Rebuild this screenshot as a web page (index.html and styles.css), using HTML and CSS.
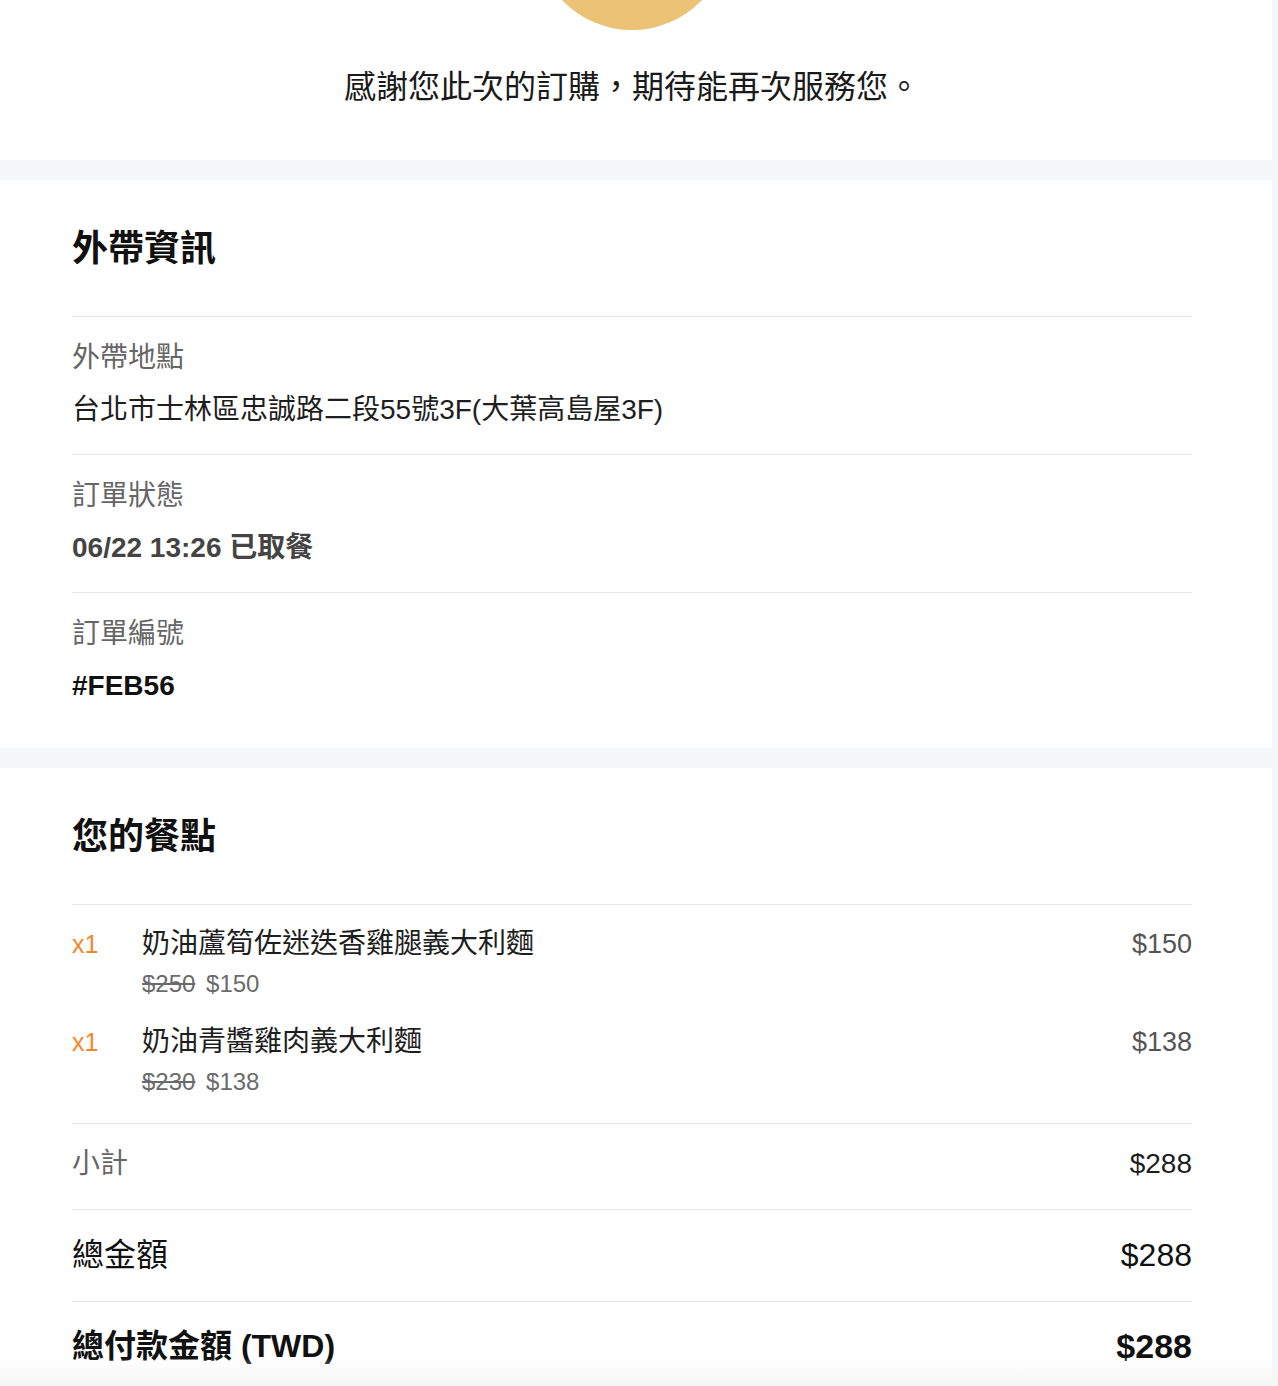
FILE: index.html
```html
<!DOCTYPE html>
<html lang="zh-Hant">
<head>
  <meta charset="UTF-8">
  <meta name="viewport" content="width=device-width, initial-scale=1.0">
  <link rel="stylesheet" href="styles.css">
  <title>訂單明細</title>
</head>
<body>
  <div class="page">
    <section class="thanks">
      <div class="avatar"></div>
      <p class="thanks-text">感謝您此次的訂購，期待能再次服務您。</p>
    </section>

    <section class="card">
      <h2>外帶資訊</h2>
      <div class="info-row">
        <div class="label">外帶地點</div>
        <div class="value">台北市士林區忠誠路二段55號3F(大葉高島屋3F)</div>
      </div>
      <div class="info-row">
        <div class="label">訂單狀態</div>
        <div class="value status">06/22 13:26 已取餐</div>
      </div>
      <div class="info-row last">
        <div class="label">訂單編號</div>
        <div class="value order-no">#FEB56</div>
      </div>
    </section>

    <section class="card">
      <h2>您的餐點</h2>
      <div class="items">
        <div class="item">
          <span class="qty">x1</span>
          <div class="item-info">
            <div class="item-name">奶油蘆筍佐迷迭香雞腿義大利麵</div>
            <div class="item-price"><s>$250</s> $150</div>
          </div>
          <span class="item-total">$150</span>
        </div>
        <div class="item">
          <span class="qty">x1</span>
          <div class="item-info">
            <div class="item-name">奶油青醬雞肉義大利麵</div>
            <div class="item-price"><s>$230</s> $138</div>
          </div>
          <span class="item-total">$138</span>
        </div>
      </div>
      <div class="sum-row subtotal">
        <span>小計</span>
        <span class="amount">$288</span>
      </div>
      <div class="sum-row total">
        <span>總金額</span>
        <span class="amount">$288</span>
      </div>
      <div class="sum-row grand">
        <span>總付款金額 (TWD)</span>
        <span class="amount">$288</span>
      </div>
    </section>
  </div>
  <div class="bottom-fade"></div>
</body>
</html>
```

FILE: styles.css
```css
body {
    margin: 0;
    padding: 0;
    background-color: #f6f7f9;
    font-family: 'Liberation Sans', 'Noto Sans CJK TC', sans-serif;
    color: #222;
}

.page {
    width: 1272px;
    overflow: hidden;
}

.thanks {
    background-color: white;
    text-align: center;
    padding: 0 80px 51px 72px;
    margin-bottom: 20px;
}

.avatar {
    width: 194px;
    height: 194px;
    margin: -164px auto 0;
    border-radius: 50%;
    background-color: #ebc276;
}

.thanks-text {
    margin: 35px 0 0;
    font-size: 32px;
    line-height: 44px;
    color: #1a1a1a;
}

.card {
    background-color: white;
    padding: 45px 80px 18px 72px;
    margin-bottom: 20px;
}

.card h2 {
    margin: 0 0 43px;
    font-size: 36px;
    line-height: 48px;
    font-weight: 700;
    color: #111;
}

.info-row {
    border-top: 1px solid #e4e4e4;
    padding: 21px 0 24px;
}

.label {
    font-size: 28px;
    line-height: 40px;
    color: #666;
}

.value {
    margin-top: 12px;
    font-size: 28px;
    line-height: 40px;
    color: #1e1e1e;
}

.status {
    font-weight: 600;
    color: #444;
}

.order-no {
    font-weight: 700;
    color: #111;
}

.items {
    border-top: 1px solid #e4e4e4;
    padding: 19px 0 21px;
}

.item {
    display: flex;
    align-items: flex-start;
}

.item + .item {
    margin-top: 18px;
}

.qty {
    width: 70px;
    font-size: 25px;
    line-height: 40px;
    color: #f7862b;
}

.item-info {
    flex: 1;
}

.item-name {
    font-size: 28px;
    line-height: 40px;
    color: #1e1e1e;
}

.item-price {
    font-size: 24px;
    line-height: 40px;
    color: #6b6b6b;
}

.item-price s {
    margin-right: 4px;
}

.item-total {
    font-size: 27px;
    line-height: 40px;
    color: #555;
}

.sum-row {
    display: flex;
    justify-content: space-between;
    border-top: 1px solid #e4e4e4;
}

.subtotal {
    padding: 20px 0 25px;
    font-size: 28px;
    line-height: 40px;
    color: #666;
}

.subtotal .amount {
    color: #1e1e1e;
}

.total {
    padding: 21px 0 22px;
    font-size: 32px;
    line-height: 48px;
    color: #111;
}

.total .amount {
    font-size: 32px;
}

.grand {
    padding: 20px 0 20px;
    font-size: 32px;
    line-height: 48px;
    font-weight: 700;
    color: #111;
}

.grand .amount {
    font-size: 34px;
}

.bottom-fade {
    position: fixed;
    left: 0;
    right: 0;
    bottom: 0;
    height: 28px;
    background: linear-gradient(rgba(246, 246, 246, 0), rgba(246, 246, 246, 1));
}
```
